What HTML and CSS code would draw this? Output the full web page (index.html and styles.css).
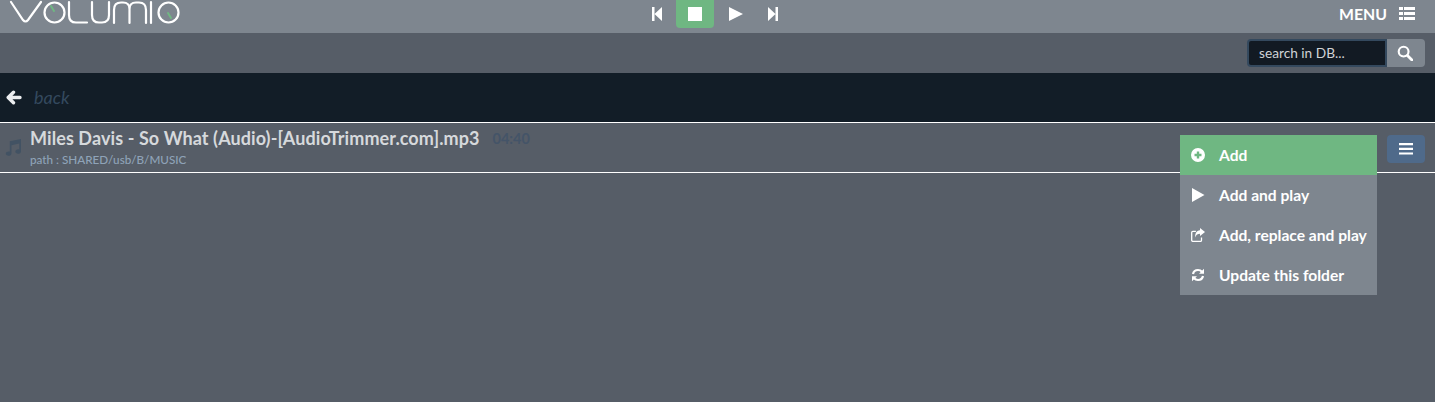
FILE: index.html
```html
<!DOCTYPE html>
<html lang="en">
<head>
<meta charset="utf-8">
<title>Volumio</title>
<link rel="stylesheet" href="styles.css">
</head>
<body>
<header class="topbar">
  <svg class="logo" width="190" height="33" viewBox="0 0 190 33" fill="none" stroke="#fff" stroke-width="2.200" stroke-linecap="round" aria-label="Volumio">
    <path d="M11 2 L23 20 Q25.500 23 28 20 L41 2"/>
    <circle cx="54.500" cy="12.500" r="10"/>
    <path d="M69 2 V15 Q69 22.500 76 22.500 H87"/>
    <path d="M92 2 V15 Q92 22.500 99 22.500 H102 Q109 22.500 109 15 V2"/>
    <path d="M114 23 V10 Q114 2.500 121 2.500 H123 Q129.500 2.500 129.500 9 V23 M129.500 9 Q129.500 2.500 136 2.500 H139 Q146 2.500 146 10 V23"/>
    <path d="M151 2 V23"/>
    <circle cx="168.500" cy="12.500" r="10"/>
    <path d="M51 6 L54 11 M168 13 L171 18" stroke="#6fb782" stroke-width="2"/>
  </svg>
  <div class="transport">
    <svg class="ti ti-prev" width="12" height="14" viewBox="0 0 12 14"><path fill="#fff" d="M1 0h2.500v14H1zM3.500 7L11 0v14z"/></svg>
    <span class="stop"><span class="stop-sq"></span></span>
    <svg class="ti ti-play" width="14" height="14" viewBox="0 0 14 14"><path fill="#fff" d="M0 0l14 7-14 7z"/></svg>
    <svg class="ti" width="12" height="14" viewBox="0 0 12 14"><path fill="#fff" d="M8.500 0H11v14H8.500zM8.500 7L1 0v14z"/></svg>
  </div>
  <div class="menu-link">
    <span>MENU</span>
    <svg width="16" height="13" viewBox="0 0 16 13"><path fill="#fff" d="M0 0h4v3H0zM5 0h11v3H5zM0 5h4v3H0zM5 5h11v3H5zM0 10h4v3H0zM5 10h11v3H5z"/></svg>
  </div>
</header>
<div class="searchbar">
  <div class="search-input">search in DB...</div>
  <div class="search-btn">
    <svg width="16" height="16" viewBox="0 0 15 15" fill="none" stroke="#fff"><circle cx="6.200" cy="6.200" r="4.600" stroke-width="2"/><path d="M9.800 9.800L14 14" stroke-width="2.600" stroke-linecap="round"/></svg>
  </div>
</div>
<div class="backbar">
  <svg width="16" height="15" viewBox="0 0 16 15"><path fill="none" stroke="#eceef0" stroke-width="3.400" stroke-linecap="round" stroke-linejoin="round" d="M7.500 2.200L2.200 7.500l5.300 5.300M2.500 7.500H14"/></svg>
  <span class="back-text">back</span>
</div>
<section class="row">
  <svg class="note" width="18" height="18" viewBox="0 0 18 18"><path fill="#425263" d="M17 1v12.500c0 1.400-1.500 2.300-3 2.300s-2.700-.9-2.700-2.200 1.300-2.300 2.800-2.300c.5 0 .9.100 1.200.2V5.500L7.500 7.300v8.200c0 1.400-1.500 2.300-3 2.300S1.800 16.900 1.800 15.600s1.300-2.200 2.800-2.200c.5 0 .9 0 1.200.2V3.200z"/></svg>
  <div class="track">
    <div class="title-line"><span class="title">Miles Davis - So What (Audio)-[AudioTrimmer.com].mp3</span><span class="time">04:40</span></div>
    <div class="path">path : SHARED/usb/B/MUSIC</div>
  </div>
  <div class="actions">
    <ul class="dropdown">
      <li class="item active">
        <svg width="14" height="14" viewBox="0 0 14 14"><path fill="#fff" fill-rule="evenodd" d="M7 0a7 7 0 1 1 0 14A7 7 0 0 1 7 0zM5.800 3.500v2.300H3.500v2.400h2.300v2.300h2.400V8.200h2.300V5.800H8.200V3.500z"/></svg>
        <span>Add</span>
      </li>
      <li class="item">
        <svg width="14" height="14" viewBox="0 0 14 14"><path fill="#fff" d="M1 0l12.500 7L1 14z"/></svg>
        <span>Add and play</span>
      </li>
      <li class="item">
        <svg width="14" height="14" viewBox="0 0 14 14"><path fill="none" stroke="#fff" stroke-width="1.300" d="M10.500 9.500v2.700a1.200 1.200 0 0 1-1.200 1.200H1.900a1.200 1.200 0 0 1-1.200-1.200V4.500a1.200 1.200 0 0 1 1.200-1.200h3"/><path fill="#fff" d="M9 0l5 4-5 4V5.800C6.800 5.800 5 6.800 4.200 9.500 4 5.500 5.500 2.500 9 2.300z"/></svg>
        <span>Add, replace and play</span>
      </li>
      <li class="item">
        <svg width="14" height="14" viewBox="0 0 14 14" fill="none" stroke="#fff" stroke-width="2.200"><path d="M2 6C2.500 3.500 4.500 2 7 2c1.600 0 3 .7 4 1.800"/><path d="M12 8c-.5 2.500-2.500 4-5 4-1.600 0-3-.7-4-1.800"/><path fill="#fff" stroke="none" d="M13 .8v5h-5zM1 13.200v-5h5z"/></svg>
        <span>Update this folder</span>
      </li>
    </ul>
    <button class="hamburger" type="button" aria-label="Options">
      <svg width="14" height="12" viewBox="0 0 14 12"><path fill="#fff" d="M0 0h14v2.200H0zM0 4.700h14v2.200H0zM0 9.400h14v2.200H0z"/></svg>
    </button>
  </div>
</section>
</body>
</html>
```
FILE: styles.css
```css
* { box-sizing: border-box; }
html, body { margin: 0; height: 100%; }
body {
  background: #565d67;
  font-family: Lato, "Open Sans", sans-serif;
  color: #fff;
  overflow: hidden;
}
.topbar {
  height: 33px;
  background: #7e868f;
  display: grid;
  grid-template-columns: 1fr auto 1fr;
  align-items: start;
}
.logo { display: block; }
.transport {
  display: flex;
  align-items: center;
  height: 28px;
  padding-right: 5px;
}
.ti { display: block; }
.ti-prev { margin-right: 13px; }
.ti-play { margin-left: 15px; margin-right: 24px; }
.stop {
  width: 38px;
  height: 28px;
  background: #6fb782;
  border-radius: 0 0 4px 4px;
  display: flex;
  align-items: center;
  justify-content: center;
}
.stop-sq { width: 14px; height: 14px; background: #fff; display: block; }
.menu-link {
  justify-self: end;
  display: flex;
  align-items: center;
  gap: 12px;
  height: 27px;
  padding-right: 20px;
  font-size: 15.800px;
  font-weight: 700;
}
.searchbar {
  height: 40px;
  display: flex;
  justify-content: flex-end;
  align-items: center;
  padding: 0 10px 0 0;
}
.search-input {
  width: 140px;
  height: 28px;
  background: #121a23;
  border: 2px solid #34495e;
  border-radius: 4px 0 0 4px;
  color: #d0d3d6;
  font-size: 13.700px;
  line-height: 24px;
  padding-left: 10px;
}
.search-btn {
  width: 38px;
  height: 28px;
  background: #7e868f;
  border-radius: 0 4px 4px 0;
  display: flex;
  align-items: center;
  justify-content: center;
  padding-right: 2px;
}
.backbar {
  height: 49px;
  background: #121d27;
  display: flex;
  align-items: center;
  gap: 12px;
  padding-left: 6px;
}
.back-text {
  color: #34495e;
  font-size: 18px;
  font-style: italic;
  position: relative;
  top: -1px;
}
.row {
  height: 51px;
  border-top: 1px solid #fff;
  border-bottom: 1px solid #fff;
  display: flex;
  align-items: flex-start;
  padding-left: 4px;
}
.note { margin-top: 15px; margin-right: 8px; flex: none; }
.track { padding-top: 4px; }
.title-line { display: flex; align-items: center; gap: 13px; height: 22px; }
.title { font-size: 18px; font-weight: 700; color: #d6d9dc; letter-spacing: 0.090px; }
.time { font-size: 14.500px; font-weight: 700; color: #445468; }
.path { font-size: 11.700px; font-weight: 500; color: #8fa3b8; margin-top: 4px; line-height: 13px; }
.actions {
  margin-left: auto;
  display: flex;
  align-items: flex-start;
  gap: 10px;
  padding: 12px 10px 0 0;
}
.dropdown {
  list-style: none;
  margin: 0;
  padding: 0;
  width: 197px;
  background: #7e868f;
  position: relative;
  z-index: 2;
}
.item {
  height: 40px;
  display: flex;
  align-items: center;
  gap: 14px;
  padding-left: 11px;
  font-size: 15.600px;
  font-weight: 700;
  color: #fff;
}
.item svg { flex: none; }
.item.active { background: #6fb782; }
.hamburger {
  width: 38px;
  height: 28px;
  border: 0;
  padding: 0;
  background: #4f6a8a;
  border-radius: 4px;
  display: flex;
  align-items: center;
  justify-content: center;
}
```
